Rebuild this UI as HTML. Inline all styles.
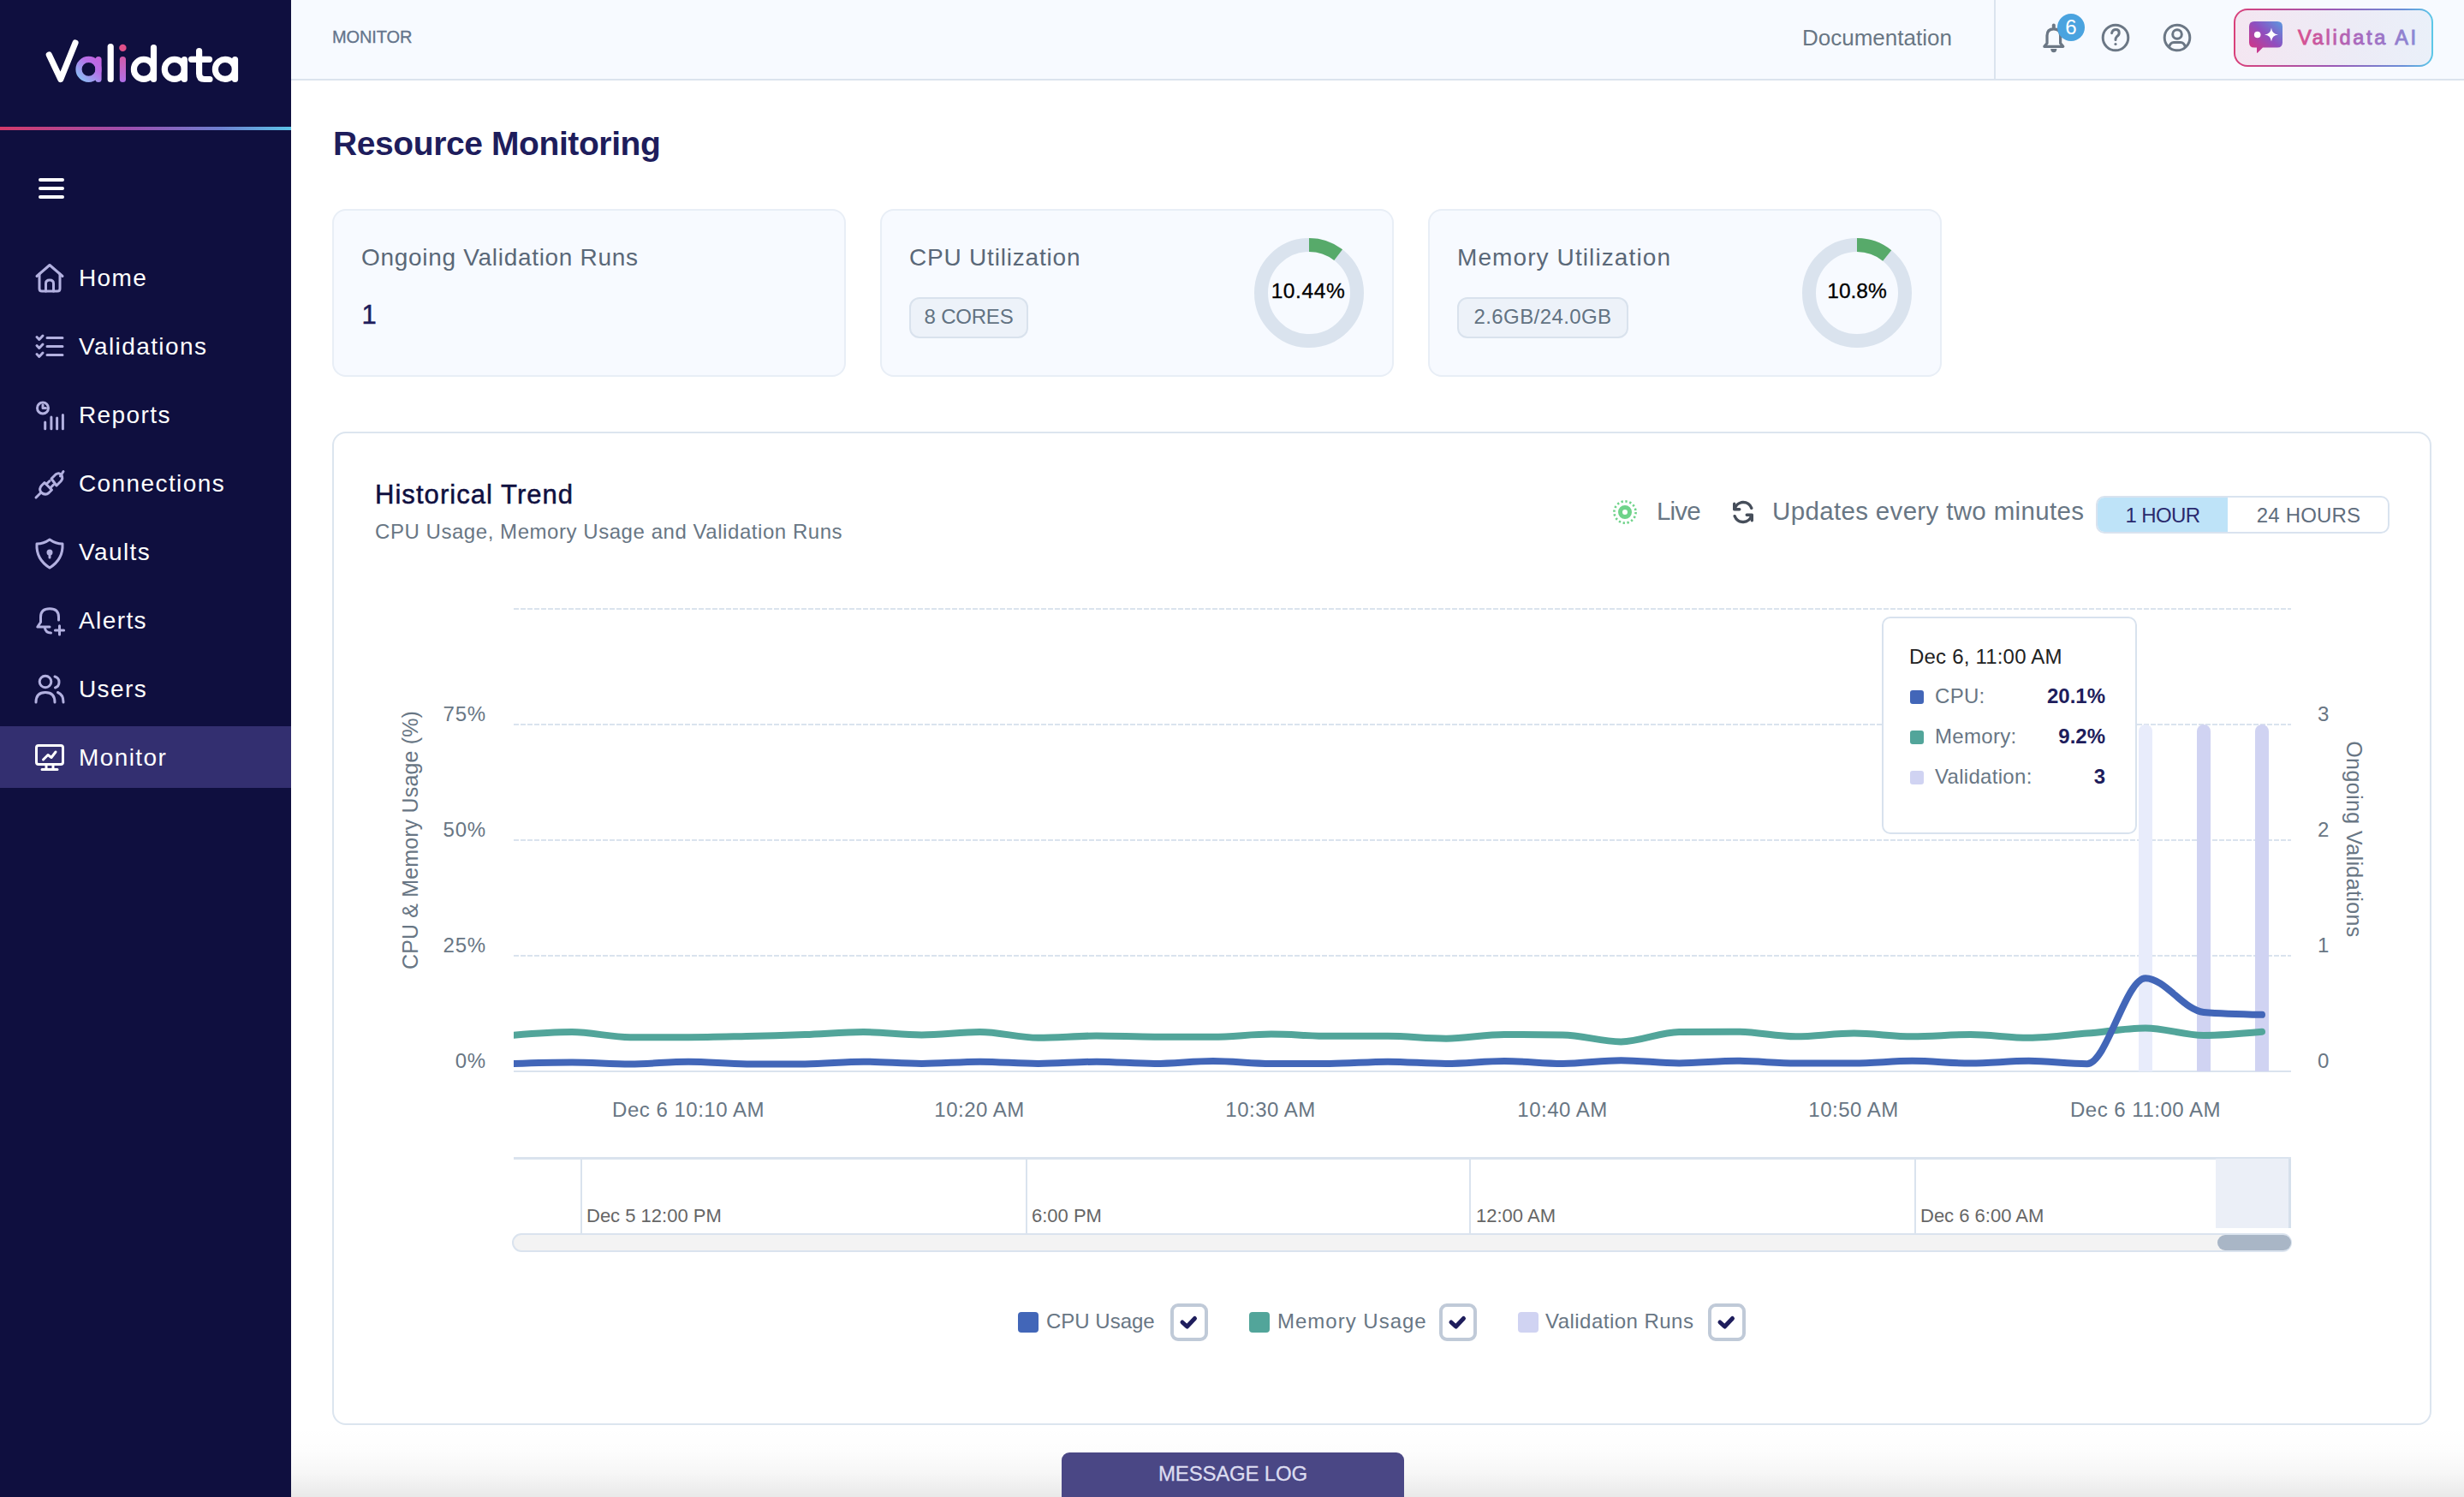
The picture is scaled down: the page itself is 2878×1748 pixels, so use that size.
<!DOCTYPE html>
<html>
<head>
<meta charset="utf-8">
<style>
*{margin:0;padding:0;box-sizing:border-box}
html,body{width:2878px;height:1748px;overflow:hidden;background:#fff;font-family:"Liberation Sans",sans-serif}
.abs{position:absolute}
#side{position:absolute;left:0;top:0;width:340px;height:1748px;background:#0f0f3f}
#gline{position:absolute;left:0;top:148px;width:340px;height:4px;background:linear-gradient(90deg,#d43a6a 0%,#9b4fb0 45%,#6f7fd0 75%,#5cc4e8 100%)}
.nav{position:absolute;left:0;width:340px;height:72px}
.nav.act{background:#332f70}
.nav svg{position:absolute;left:38px;top:18px;width:40px;height:40px}
.nav span{position:absolute;left:92px;top:1px;line-height:72px;font-size:28px;letter-spacing:1.4px;color:#fff}
#header{position:absolute;left:340px;top:0;width:2538px;height:94px;background:#f7faff;border-bottom:2px solid #dbe4ee}
.t{position:absolute;white-space:nowrap}
.card{position:absolute;top:244px;height:196px;background:#f7faff;border:2px solid #e8eef6;border-radius:16px}
.badge{position:absolute;height:48px;border:2px solid #d9e2ed;background:#edf2f9;border-radius:12px;color:#627282;font-size:24px;line-height:42px;letter-spacing:-0.2px}
</style>
</head>
<body>
<div id="side">
  <svg class="abs" style="left:0;top:0" width="340" height="140" viewBox="0 0 340 140">
    <defs>
      <linearGradient id="ga" gradientUnits="userSpaceOnUse" x1="90" y1="96" x2="120" y2="64">
        <stop offset="0" stop-color="#7fd0f8"/><stop offset="0.6" stop-color="#b86ee8"/><stop offset="1" stop-color="#c85fd8"/>
      </linearGradient>
      <linearGradient id="gi" gradientUnits="userSpaceOnUse" x1="143" y1="52" x2="143" y2="96">
        <stop offset="0" stop-color="#e0508a"/><stop offset="1" stop-color="#b070e8"/>
      </linearGradient>
    </defs>
    <g fill="none" stroke="#fff" stroke-width="7.2" stroke-linecap="round" stroke-linejoin="round">
      <polyline points="57.3,64 70.8,92.5 88,50"/>
      <line x1="129.2" y1="54.6" x2="129.2" y2="92.5"/>
      <circle cx="167.9" cy="80.9" r="11.5"/>
      <line x1="179.5" y1="55.7" x2="179.5" y2="92.5"/>
      <circle cx="203.8" cy="80.9" r="11.5"/>
      <line x1="215.4" y1="69.5" x2="215.4" y2="92.5"/>
      <path d="M232.6,59.5 V86 Q232.6,92.5 239,92.5 H245"/>
      <line x1="223.5" y1="69.3" x2="244.5" y2="69.3"/>
      <circle cx="262.9" cy="80.9" r="11.5"/>
      <line x1="274.5" y1="69.5" x2="274.5" y2="92.5"/>
    </g>
    <g fill="none" stroke="url(#ga)" stroke-width="7.2" stroke-linecap="round">
      <circle cx="103.5" cy="80.9" r="11.5"/>
      <line x1="115" y1="69.5" x2="115" y2="92.5"/>
    </g>
    <line x1="143.4" y1="69.5" x2="143.4" y2="92.5" stroke="url(#gi)" stroke-width="7.2" stroke-linecap="round"/>
    <circle cx="143.4" cy="55.9" r="4.2" fill="#e0508a"/>
  </svg>
  <div id="gline"></div>
  <!-- hamburger -->
  <div class="abs" style="left:45px;top:208px;width:30px;height:4px;background:#fff;border-radius:2px"></div>
  <div class="abs" style="left:45px;top:218px;width:30px;height:4px;background:#fff;border-radius:2px"></div>
  <div class="abs" style="left:45px;top:228px;width:30px;height:4px;background:#fff;border-radius:2px"></div>

  <div class="nav" style="top:288px"><svg viewBox="0 0 40 40" fill="none" stroke="#b3b1e0" stroke-width="3" stroke-linecap="round" stroke-linejoin="round"><path d="M5,16.5 L20,3.5 L35,16.5"/><path d="M8,14 V31 Q8,34 11,34 H29 Q32,34 32,31 V14"/><path d="M15.5,34 V25 Q15.5,21 20,21 Q24.5,21 24.5,25 V34"/></svg><span>Home</span></div>
  <div class="nav" style="top:368px"><svg viewBox="0 0 40 40" fill="none" stroke="#b3b1e0" stroke-width="3" stroke-linecap="round" stroke-linejoin="round"><path d="M5,7.5 L7.8,10.5 L12,6"/><path d="M5,17.5 L7.8,20.5 L12,16"/><path d="M5,27.5 L7.8,30.5 L12,26"/><path d="M17,8.5 H35 M17,18.5 H35 M17,28.5 H35"/></svg><span>Validations</span></div>
  <div class="nav" style="top:448px"><svg viewBox="0 0 40 40" fill="none" stroke="#b3b1e0" stroke-width="3" stroke-linecap="round" stroke-linejoin="round"><circle cx="12" cy="10.5" r="6.5"/><path d="M12,7 V10.5 H15.5"/><path d="M14.7,27 V34.7 M21.9,21 V34.7 M28.6,22 V34.7 M35.4,18.4 V34.7"/></svg><span>Reports</span></div>
  <div class="nav" style="top:528px"><svg viewBox="0 0 40 40" fill="none" stroke="#b3b1e0" stroke-width="3" stroke-linecap="round" stroke-linejoin="round"><path d="M4,35 L10,29"/><path d="M10,29 Q7,25 10.5,21 L14,17.5 L22.5,26 L19,29.5 Q15,33 10,29 Z"/><path d="M16,19.5 L20,15.5 M20.5,24 L24.5,20"/><path d="M22,13 L27,8 Q31,5 34,9 Q36,12.5 33,16 L28,21 Z"/><path d="M32.5,10 L36,4.5"/></svg><span>Connections</span></div>
  <div class="nav" style="top:608px"><svg viewBox="0 0 40 40" fill="none" stroke="#b3b1e0" stroke-width="3" stroke-linecap="round" stroke-linejoin="round"><path d="M20,4 Q27,9 35,9 Q36,27 20,37 Q4,27 5,9 Q13,9 20,4 Z"/><circle cx="20" cy="19" r="2" fill="#b3b1e0"/><path d="M20,20 V25"/></svg><span>Vaults</span></div>
  <div class="nav" style="top:688px"><svg viewBox="0 0 40 40" fill="none" stroke="#b3b1e0" stroke-width="3" stroke-linecap="round" stroke-linejoin="round"><path d="M30.5,18 V14.5 Q30.5,4.8 20,4.8 Q9.5,4.8 9.5,14.5 V20.5 L5.8,26 H20"/><path d="M14.2,26.5 Q15.2,33 21.5,33"/><path d="M31.5,24.8 V35 M26.4,29.9 H36.6"/></svg><span>Alerts</span></div>
  <div class="nav" style="top:768px"><svg viewBox="0 0 40 40" fill="none" stroke="#b3b1e0" stroke-width="3" stroke-linecap="round" stroke-linejoin="round"><circle cx="15" cy="10" r="6.8"/><path d="M4,34 Q4,22.5 15,22.5 Q26,22.5 26,34"/><path d="M26,4 Q31,5.5 31,10.5 Q31,15.5 26.5,17"/><path d="M29.5,22.5 Q36,25 36,34"/></svg><span>Users</span></div>
  <div class="nav act" style="top:848px"><svg viewBox="0 0 40 40" fill="none" stroke="#fff" stroke-width="3" stroke-linecap="round" stroke-linejoin="round"><rect x="4.5" y="4.5" width="31" height="22" rx="2.5"/><path d="M12.5,21 L18,15.5 L22,18.5 L27,12"/><path d="M16,27 V32 M24,27 V32 M11,32.5 H29"/></svg><span>Monitor</span></div>
</div>

<div id="header">
  <div class="t" style="left:48px;top:30px;font-size:20px;line-height:26px;color:#64748b;letter-spacing:-0.1px;-webkit-text-stroke:0.3px #64748b">MONITOR</div>
  <div class="t" style="left:1765px;top:28px;font-size:26px;line-height:32px;color:#687684;letter-spacing:0px">Documentation</div>
  <div class="abs" style="left:1989px;top:0;width:2px;height:92px;background:#dbe4ee"></div>
  <!-- bell -->
  <svg class="abs" style="left:2032px;top:22px" width="50" height="44" viewBox="0 0 50 44" fill="none" stroke="#6b7785" stroke-width="3.2" stroke-linejoin="round">
    <path d="M19,28.5 V19.5 Q19,11.8 26.8,11.8 Q34.6,11.8 34.6,19.5 V28.5 L37.8,32.3 H15.8 Z"/>
    <path d="M26.8,7.6 V10" stroke-linecap="round" stroke-width="4"/>
    <path d="M23.8,35.6 Q24.4,38.7 26.8,38.7 Q29.2,38.7 29.8,35.6 Z" fill="#6b7785" stroke-width="1.2"/>
  </svg>
  <div class="abs" style="left:2063px;top:16px;width:32px;height:32px;border-radius:50%;background:#4aa3df;color:#fff;font-size:24px;line-height:32px;text-align:center">6</div>
  <svg class="abs" style="left:2110px;top:23px" width="42" height="42" viewBox="0 0 42 42" fill="none" stroke="#6b7785" stroke-width="3">
    <circle cx="21" cy="21" r="14.8"/>
    <path d="M16.6,15.6 Q17.6,11.6 21.3,11.6 Q25.2,11.6 25.2,15.2 Q25.2,17.8 22.4,19.8 Q21,21 21,23.6" stroke-linecap="round"/>
    <circle cx="21" cy="28.5" r="1.6" fill="#6b7785" stroke="none"/>
  </svg>
  <svg class="abs" style="left:2182px;top:23px" width="42" height="42" viewBox="0 0 42 42" fill="none" stroke="#6b7785" stroke-width="3">
    <circle cx="21" cy="21" r="14.8"/>
    <circle cx="21" cy="17" r="5.3"/>
    <path d="M11.5,32 Q13,26.5 17,26.5 H25 Q29,26.5 30.5,32"/>
  </svg>
  <!-- AI button -->
  <div class="abs" style="left:2269px;top:10px;width:233px;height:68px;border-radius:16px;background:linear-gradient(90deg,#d9407a,#9b59b6 50%,#6a8fd8 85%,#5cc8e8);padding:2px">
    <div style="width:100%;height:100%;border-radius:14px;background:linear-gradient(90deg,#f4e6f1,#ecebf6 60%,#eaf0f9)"></div>
  </div>
  <svg class="abs" style="left:2286px;top:24px" width="42" height="40" viewBox="0 0 42 40">
    <defs><linearGradient id="gai" x1="0" y1="1" x2="1" y2="0"><stop offset="0" stop-color="#e0307a"/><stop offset="0.55" stop-color="#8e4fc0"/><stop offset="1" stop-color="#5a9ae0"/></linearGradient></defs>
    <path d="M7,1 H34 Q40,1 40,7 V25.5 Q40,31.5 34,31.5 H17 L11,37.5 Q10,38.5 10,37 V31.5 H7 Q1,31.5 1,25.5 V7 Q1,1 7,1 Z" fill="url(#gai)"/>
    <circle cx="10.7" cy="16.5" r="3.8" fill="#fff"/>
    <path d="M27,8.5 Q27.8,15.8 35,16.5 Q27.8,17.2 27,24.5 Q26.2,17.2 19,16.5 Q26.2,15.8 27,8.5 Z" fill="#fff"/>
  </svg>
  <svg class="abs" style="left:2340px;top:20px" width="150" height="44" viewBox="0 0 150 44">
    <defs><linearGradient id="gtx" gradientUnits="userSpaceOnUse" x1="3" y1="0" x2="141" y2="0"><stop offset="0" stop-color="#d94f8f"/><stop offset="0.55" stop-color="#a66ac0"/><stop offset="1" stop-color="#8a88d4"/></linearGradient></defs>
    <text x="4" y="32" font-family="Liberation Sans" font-size="23.5" letter-spacing="2.75" fill="url(#gtx)" stroke="url(#gtx)" stroke-width="0.9">Validata AI</text>
  </svg>
</div>

<div class="t" style="left:389px;top:145px;font-size:39px;line-height:46px;font-weight:bold;color:#1e1d5c;letter-spacing:-0.4px">Resource Monitoring</div>

<div class="card" style="left:388px;width:600px">
  <div class="t" style="left:32px;top:38px;font-size:28px;line-height:34px;color:#5a6878;letter-spacing:0.7px">Ongoing Validation Runs</div>
  <div class="t" style="left:32.5px;top:104px;font-size:31px;line-height:36px;color:#1e1d5c;-webkit-text-stroke:0.5px #1e1d5c">1</div>
</div>
<div class="card" style="left:1028px;width:600px">
  <div class="t" style="left:32px;top:38px;font-size:28px;line-height:34px;color:#5a6878;letter-spacing:0.8px">CPU Utilization</div>
  <div class="badge" style="left:32px;top:101px;width:139px;text-align:center">8 CORES</div>
  <svg class="abs" style="left:433px;top:30px" width="132" height="132" viewBox="0 0 132 132">
    <circle cx="66" cy="66" r="56" fill="none" stroke="#dae3ee" stroke-width="16"/>
    <circle cx="66" cy="66" r="56" fill="none" stroke="#57aa6a" stroke-width="16" stroke-dasharray="36.73 400" transform="rotate(-90 66 66)"/>
  </svg>
  <div class="t" style="left:432px;top:77px;width:132px;text-align:center;font-size:24.5px;line-height:34px;color:#000;letter-spacing:0.6px;-webkit-text-stroke:0.3px #000">10.44%</div>
</div>
<div class="card" style="left:1668px;width:600px">
  <div class="t" style="left:32px;top:38px;font-size:28px;line-height:34px;color:#5a6878;letter-spacing:1.1px">Memory Utilization</div>
  <div class="badge" style="left:32px;top:101px;width:200px;text-align:center;letter-spacing:0.4px">2.6GB/24.0GB</div>
  <svg class="abs" style="left:433px;top:30px" width="132" height="132" viewBox="0 0 132 132">
    <circle cx="66" cy="66" r="56" fill="none" stroke="#dae3ee" stroke-width="16"/>
    <circle cx="66" cy="66" r="56" fill="none" stroke="#57aa6a" stroke-width="16" stroke-dasharray="38.0 400" transform="rotate(-90 66 66)"/>
  </svg>
  <div class="t" style="left:433px;top:77px;width:132px;text-align:center;font-size:24.5px;line-height:34px;color:#000;letter-spacing:0px;-webkit-text-stroke:0.3px #000">10.8%</div>
</div>

<div class="abs" style="left:388px;top:504px;width:2452px;height:1160px;border:2px solid #dce5ef;border-radius:16px;background:#fff"></div>
<div class="t" style="left:438px;top:559px;font-size:31px;line-height:38px;color:#0f0f3f;letter-spacing:1.05px;-webkit-text-stroke:0.5px #0f0f3f">Historical Trend</div>
<div class="t" style="left:438px;top:606px;font-size:24px;line-height:30px;color:#687684;letter-spacing:0.55px">CPU Usage, Memory Usage and Validation Runs</div>
<!-- live -->
<svg class="abs" style="left:1882px;top:582px" width="32" height="32" viewBox="0 0 32 32">
  <circle cx="16" cy="16" r="12.6" fill="none" stroke="#6fd38a" stroke-width="2.6" stroke-dasharray="2.3 2.65"/>
  <circle cx="16" cy="16" r="5.5" fill="none" stroke="#6fd38a" stroke-width="5"/>
</svg>
<div class="t" style="left:1935px;top:581px;font-size:29.5px;line-height:32px;color:#687684;letter-spacing:-0.8px">Live</div>
<svg class="abs" style="left:2021px;top:583px" width="30" height="30" viewBox="0 0 32 32" fill="none" stroke="#464e5a" stroke-width="3.6" stroke-linecap="round" stroke-linejoin="round">
  <path d="M5.5,12 A11,11 0 0 1 26.5,11"/>
  <path d="M26.5,20 A11,11 0 0 1 5.5,21"/>
  <path d="M5,5.5 V12.5 H11.5"/>
  <path d="M27,26.5 V19.5 H20.5"/>
</svg>
<div class="t" style="left:2070px;top:581px;font-size:29.5px;line-height:32px;color:#687684;letter-spacing:0.34px">Updates every two minutes</div>
<div class="abs" style="left:2448px;top:579px;width:343px;height:44px;border:2px solid #d9e3ef;border-radius:10px;overflow:hidden;background:#fff">
  <div class="abs" style="left:0;top:0;width:152px;height:40px;background:#bee3f8"></div>
  <div class="t" style="left:0;top:0;width:152px;text-align:center;font-size:24px;line-height:42px;color:#2a2a6e;letter-spacing:-0.6px">1 HOUR</div>
  <div class="t" style="left:152px;top:0;width:189px;text-align:center;font-size:24px;line-height:42px;color:#5f6d7d;letter-spacing:0.2px">24 HOURS</div>
</div>
<!-- chart -->
<svg class="abs" style="left:0;top:0" width="2878" height="1748" viewBox="0 0 2878 1748">
  <g stroke="#dae3ee" stroke-width="2" stroke-dasharray="6 2">
    <line x1="600" y1="711" x2="2676" y2="711"/>
    <line x1="600" y1="846" x2="2676" y2="846"/>
    <line x1="600" y1="981" x2="2676" y2="981"/>
    <line x1="600" y1="1116" x2="2676" y2="1116"/>
  </g>
  <line x1="600" y1="1251" x2="2676" y2="1251" stroke="#dae3ee" stroke-width="2"/>
  <g stroke-linecap="round">
    <path d="M2498,1251 V854 A8,8 0 0 1 2514,854 V1251 Z" fill="#e8ecfb"/>
    <path d="M2566,1251 V854 A8,8 0 0 1 2582,854 V1251 Z" fill="#d0d3f2"/>
    <path d="M2634,1251 V854 A8,8 0 0 1 2650,854 V1251 Z" fill="#d0d3f2"/>
  </g>
  <rect x="2490" y="1243" width="170" height="8" fill="#fff" opacity="0"/>
  <defs><clipPath id="cl"><rect x="600" y="600" width="2100" height="700"/></clipPath></defs>
  <g clip-path="url(#cl)">
  <path d="M600.0,1208.7 C622.7,1206.8 645.4,1205.0 668.1,1205.0 C690.8,1205.0 713.4,1211.2 736.1,1211.2 C758.8,1211.2 781.5,1211.2 804.2,1211.2 C826.9,1211.2 849.6,1210.5 872.3,1210.0 C895.0,1209.5 917.6,1208.8 940.3,1208.0 C963.0,1207.2 985.7,1205.0 1008.4,1205.0 C1031.1,1205.0 1053.8,1208.4 1076.5,1208.4 C1099.2,1208.4 1121.8,1205.0 1144.5,1205.0 C1167.2,1205.0 1189.9,1211.8 1212.6,1211.8 C1235.3,1211.8 1258.0,1209.5 1280.7,1209.5 C1303.4,1209.5 1326.0,1210.7 1348.7,1210.7 C1371.4,1210.7 1394.1,1210.7 1416.8,1210.7 C1439.5,1210.7 1462.2,1207.6 1484.9,1207.6 C1507.6,1207.6 1530.2,1209.8 1552.9,1209.8 C1575.6,1209.8 1598.3,1209.8 1621.0,1209.8 C1643.7,1209.8 1666.4,1212.7 1689.1,1212.7 C1711.8,1212.7 1734.4,1208.0 1757.1,1208.0 C1779.8,1208.0 1802.5,1208.1 1825.2,1208.4 C1847.9,1208.7 1870.6,1216.4 1893.3,1216.4 C1916.0,1216.4 1938.6,1205.2 1961.3,1205.0 C1984.0,1204.8 2006.7,1204.7 2029.4,1204.7 C2052.1,1204.7 2074.8,1210.3 2097.5,1210.3 C2120.2,1210.3 2142.8,1206.6 2165.5,1206.6 C2188.2,1206.6 2210.9,1210.3 2233.6,1210.3 C2256.3,1210.3 2279.0,1208.0 2301.7,1208.0 C2324.4,1208.0 2347.0,1211.8 2369.7,1211.8 C2392.4,1211.8 2415.1,1208.5 2437.8,1206.6 C2460.5,1204.7 2483.2,1200.4 2505.9,1200.4 C2528.6,1200.4 2551.2,1208.9 2573.9,1208.9 C2596.6,1208.9 2619.3,1206.8 2642.0,1204.7" fill="none" stroke="#52a59a" stroke-width="8" stroke-linecap="round"/>
  <path d="M600.0,1242.0 C622.7,1241.2 645.4,1240.5 668.1,1240.5 C690.8,1240.5 713.4,1242.5 736.1,1242.5 C758.8,1242.5 781.5,1239.7 804.2,1239.7 C826.9,1239.7 849.6,1242.5 872.3,1242.5 C895.0,1242.5 917.6,1242.5 940.3,1242.5 C963.0,1242.5 985.7,1239.7 1008.4,1239.7 C1031.1,1239.7 1053.8,1242.0 1076.5,1242.0 C1099.2,1242.0 1121.8,1239.7 1144.5,1239.7 C1167.2,1239.7 1189.9,1242.0 1212.6,1242.0 C1235.3,1242.0 1258.0,1239.7 1280.7,1239.7 C1303.4,1239.7 1326.0,1242.0 1348.7,1242.0 C1371.4,1242.0 1394.1,1239.0 1416.8,1239.0 C1439.5,1239.0 1462.2,1242.0 1484.9,1242.0 C1507.6,1242.0 1530.2,1242.0 1552.9,1242.0 C1575.6,1242.0 1598.3,1239.7 1621.0,1239.7 C1643.7,1239.7 1666.4,1242.0 1689.1,1242.0 C1711.8,1242.0 1734.4,1239.0 1757.1,1239.0 C1779.8,1239.0 1802.5,1242.0 1825.2,1242.0 C1847.9,1242.0 1870.6,1238.2 1893.3,1238.2 C1916.0,1238.2 1938.6,1241.4 1961.3,1241.4 C1984.0,1241.4 2006.7,1238.8 2029.4,1238.8 C2052.1,1238.8 2074.8,1241.6 2097.5,1241.6 C2120.2,1241.6 2142.8,1241.6 2165.5,1241.6 C2188.2,1241.6 2210.9,1238.8 2233.6,1238.8 C2256.3,1238.8 2279.0,1241.6 2301.7,1241.6 C2324.4,1241.6 2347.0,1238.8 2369.7,1238.8 C2392.4,1238.8 2415.1,1242.2 2437.8,1242.2 C2460.5,1242.2 2483.2,1142.2 2505.9,1142.2 C2528.6,1142.2 2551.2,1180.0 2573.9,1181.9 C2596.6,1183.8 2619.3,1184.3 2642.0,1184.8" fill="none" stroke="#4266b8" stroke-width="8" stroke-linecap="round"/>
  </g>
  <g font-family="Liberation Sans" font-size="24" fill="#687684">
    <text x="568" y="842" text-anchor="end" letter-spacing="0.8">75%</text>
    <text x="568" y="976.5" text-anchor="end" letter-spacing="0.8">50%</text>
    <text x="568" y="1111.5" text-anchor="end" letter-spacing="0.8">25%</text>
    <text x="568" y="1246.5" text-anchor="end" letter-spacing="0.8">0%</text>
    <text x="2707" y="842">3</text>
    <text x="2707" y="977">2</text>
    <text x="2707" y="1112">1</text>
    <text x="2707" y="1247">0</text>
    <text x="804" y="1304" text-anchor="middle" letter-spacing="0.5">Dec 6 10:10 AM</text>
    <text x="1144" y="1304" text-anchor="middle" letter-spacing="0.5">10:20 AM</text>
    <text x="1484" y="1304" text-anchor="middle" letter-spacing="0.5">10:30 AM</text>
    <text x="1825" y="1304" text-anchor="middle" letter-spacing="0.5">10:40 AM</text>
    <text x="2165" y="1304" text-anchor="middle" letter-spacing="0.5">10:50 AM</text>
    <text x="2506" y="1304" text-anchor="middle" letter-spacing="0.5">Dec 6 11:00 AM</text>
    <text transform="translate(488,981) rotate(-90)" text-anchor="middle" font-size="25" letter-spacing="0.15">CPU &amp; Memory Usage (%)</text>
    <text transform="translate(2741,980) rotate(90)" text-anchor="middle" font-size="25" letter-spacing="0.4">Ongoing Validations</text>
  </g>
  <!-- brush -->
  <rect x="600" y="1351" width="2076" height="3" fill="#dae3ee"/>
  <rect x="2588" y="1353" width="88" height="81" fill="#ebeff7"/>
  <rect x="2673" y="1353" width="3" height="81" fill="#d5e0ec"/>
  <g fill="#dae3ee">
    <rect x="678" y="1353" width="2" height="87"/>
    <rect x="1198" y="1353" width="2" height="87"/>
    <rect x="1716" y="1353" width="2" height="87"/>
    <rect x="2236" y="1353" width="2" height="87"/>
  </g>
  <g font-family="Liberation Sans" font-size="22" fill="#666">
    <text x="685" y="1427">Dec 5 12:00 PM</text>
    <text x="1205" y="1427">6:00 PM</text>
    <text x="1724" y="1427">12:00 AM</text>
    <text x="2243" y="1427">Dec 6 6:00 AM</text>
  </g>
  <rect x="599" y="1441" width="2077" height="20" rx="10" fill="#f3f3f3" stroke="#dae3ee" stroke-width="2"/>
  <rect x="2590" y="1442" width="86" height="18" rx="9" fill="#a9b6c6"/>
</svg>
<!-- tooltip -->
<div class="abs" style="left:2198px;top:720px;width:298px;height:254px;border:2px solid #d8e2ee;border-radius:10px;background:#fff">
  <div class="t" style="left:30px;top:30px;font-size:24px;line-height:30px;color:#222;letter-spacing:0.2px">Dec 6, 11:00 AM</div>
  <div class="abs" style="left:31px;top:84px;width:16px;height:16px;border-radius:3px;background:#4266b8"></div>
  <div class="t" style="left:60px;top:76px;font-size:24px;line-height:30px;color:#687684;letter-spacing:0.3px">CPU:</div>
  <div class="t" style="right:35px;top:76px;font-size:24px;line-height:30px;color:#1e1d5c;font-weight:bold">20.1%</div>
  <div class="abs" style="left:31px;top:131px;width:16px;height:16px;border-radius:3px;background:#52a59a"></div>
  <div class="t" style="left:60px;top:123px;font-size:24px;line-height:30px;color:#687684;letter-spacing:0.3px">Memory:</div>
  <div class="t" style="right:35px;top:123px;font-size:24px;line-height:30px;color:#1e1d5c;font-weight:bold">9.2%</div>
  <div class="abs" style="left:31px;top:178px;width:16px;height:16px;border-radius:3px;background:#d0d3f2"></div>
  <div class="t" style="left:60px;top:170px;font-size:24px;line-height:30px;color:#687684;letter-spacing:0.3px">Validation:</div>
  <div class="t" style="right:35px;top:170px;font-size:24px;line-height:30px;color:#1e1d5c;font-weight:bold">3</div>
</div>
<!-- legend -->
<div class="abs" style="left:1189px;top:1532px;width:24px;height:24px;border-radius:4px;background:#4266b8"></div>
<div class="t" style="left:1222px;top:1528px;font-size:24px;line-height:30px;color:#687684">CPU Usage</div>
<div class="abs" style="left:1367px;top:1522px;width:44px;height:44px;border:4px solid #c0cad8;border-radius:9px;background:#fff"></div>
<div class="abs" style="left:1459px;top:1532px;width:24px;height:24px;border-radius:4px;background:#52a59a"></div>
<div class="t" style="left:1492px;top:1528px;font-size:24px;line-height:30px;color:#687684;letter-spacing:1px">Memory Usage</div>
<div class="abs" style="left:1681px;top:1522px;width:44px;height:44px;border:4px solid #c0cad8;border-radius:9px;background:#fff"></div>
<div class="abs" style="left:1773px;top:1532px;width:24px;height:24px;border-radius:4px;background:#d0d3f2"></div>
<div class="t" style="left:1805px;top:1528px;font-size:24px;line-height:30px;color:#687684;letter-spacing:0.47px">Validation Runs</div>
<div class="abs" style="left:1995px;top:1522px;width:44px;height:44px;border:4px solid #c0cad8;border-radius:9px;background:#fff"></div>
<svg class="abs" style="left:0;top:0" width="2878" height="1748" viewBox="0 0 2878 1748" fill="none" stroke="#1e1d5c" stroke-width="5" stroke-linecap="round" stroke-linejoin="round">
  <path d="M1381,1544 L1386.5,1549 L1395.5,1539.5"/>
  <path d="M1695,1544 L1700.5,1549 L1709.5,1539.5"/>
  <path d="M2009,1544 L2014.5,1549 L2023.5,1539.5"/>
</svg>
<!-- bottom fade + message log -->
<div class="abs" style="left:340px;top:1664px;width:2538px;height:84px;background:linear-gradient(180deg,rgba(0,0,0,0) 0%,rgba(0,0,0,0.008) 35%,rgba(0,0,0,0.03) 65%,rgba(0,0,0,0.085) 100%)"></div>
<div class="abs" style="left:1240px;top:1696px;width:400px;height:70px;border-radius:9px;background:#4a4785"></div>
<div class="t" style="left:1240px;top:1705px;width:400px;text-align:center;font-size:24px;line-height:32px;color:#dcdcf0;letter-spacing:-0.2px;-webkit-text-stroke:0.3px #dcdcf0">MESSAGE LOG</div>

</body>
</html>
